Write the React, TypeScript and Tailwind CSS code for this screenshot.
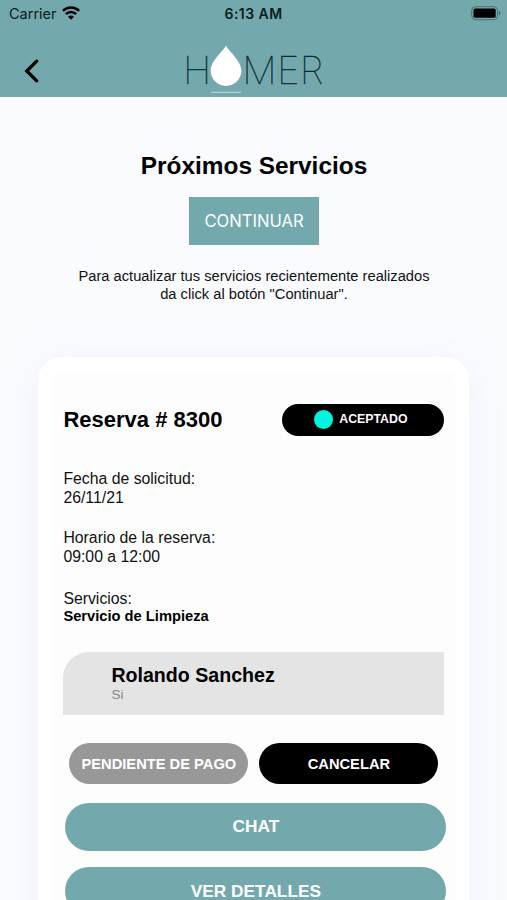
const details = [
  { label: 'Fecha de solicitud:', value: '26/11/21', className: 'mt-[34px]' },
  { label: 'Horario de la reserva:', value: '09:00 a 12:00', className: 'mt-[22px]' },
];

const StatusBar = () => (
  <div className="grid h-7 grid-cols-3 items-center pl-[9px] pr-[6px] font-[Inter,sans-serif] text-[#0b1c20]">
    <div className="flex items-center gap-[5px]">
      <span className="text-[14.5px]">Carrier</span>
      <svg className="-mt-[2px]" width="18" height="14" viewBox="0 0 18 14" fill="none" stroke="#000" strokeWidth="2.5">
        <path d="M0.9 4.9C5.4 0.4 12.6 0.4 17.1 4.9" />
        <path d="M3.9 8.2C6.8 5.3 11.2 5.3 14.1 8.2" />
        <path d="M9 13.8L6 10.8C7.7 9.2 10.3 9.2 12 10.8Z" fill="#000" stroke="none" />
      </svg>
    </div>
    <span className="-mt-px -ml-[3px] text-center text-[14px] font-semibold tracking-[0.45px]">6:13 AM</span>
    <svg className="-mt-px justify-self-end" width="30" height="15" viewBox="0 0 30 15">
      <rect x="0.7" y="0.7" width="25.8" height="13" rx="3.8" fill="none" stroke="#3c5c60" strokeOpacity="0.75" />
      <rect x="2.5" y="2.6" width="22.2" height="9.2" rx="1.6" fill="#000" />
      <path d="M27.8 5v4.4c1-.3 1.7-1.2 1.7-2.2S28.8 5.3 27.8 5Z" fill="#3c5c60" fillOpacity="0.75" />
    </svg>
  </div>
);

const Logo = () => (
  <div className="relative flex h-[52px] w-[140px] items-center font-[Inter,sans-serif] text-[38.5px] leading-none font-thin text-[#0b2a30] [-webkit-text-stroke:0.3px_#0b2a30]">
    <span>H</span>
    <svg className="absolute left-[27px] top-[1px]" width="32" height="50" viewBox="0 0 32 50">
      <path d="M16 0.5C14.5 5 0.6 15.5 0.6 25.6C0.6 34.3 7.5 41 16 41S31.4 34.3 31.4 25.6C31.4 15.5 17.5 5 16 0.5Z" fill="#fff" />
      <path d="M1 47.3H31" stroke="#c3dbdd" strokeWidth="1" />
    </svg>
    <span className="ml-[31px] tracking-[0.3px]">MER</span>
  </div>
);

const Header = () => (
  <header className="h-[97px] bg-[#73a9ad]">
    <StatusBar />
    <div className="flex h-[69px] items-start">
      <svg
        className="ml-6 mt-[31px]"
        width="15"
        height="24"
        viewBox="0 0 15 24"
        fill="none"
        stroke="#000"
        strokeWidth="3.3"
        strokeLinecap="round"
      >
        <path d="M12.7 2.2L2.8 12L12.7 21.8" />
      </svg>
      <div className="ml-[144px] mt-[16px]">
        <Logo />
      </div>
    </div>
  </header>
);

const ReservationCard = () => (
  <section className="ml-[38.4px] mr-[37.6px] mt-[54px] h-[620px] rounded-[24px] border-[14px] border-white bg-[#fdfdfd] px-[11px] pt-[33px] shadow-[0_10px_40px_rgba(90,110,190,0.07)]">
    <div className="flex items-center justify-between">
      <h2 className="text-[22px] leading-8 font-bold">Reserva # 8300</h2>
      <div className="-mt-px flex h-8 w-[162px] items-center justify-center gap-[6px] rounded-full bg-black pr-[5px] text-[12.3px] font-bold text-white">
        <span className="size-[19px] rounded-full bg-[#00f5df]" />
        ACEPTADO
      </div>
    </div>

    {details.map((item) => (
      <div key={item.label} className={`${item.className} text-[15.8px] leading-[18.5px] text-[#111]`}>
        <p>{item.label}</p>
        <p>{item.value}</p>
      </div>
    ))}
    <div className="mt-6 leading-[17.5px] text-[#111]">
      <p className="text-[15.8px]">Servicios:</p>
      <p className="text-[14.7px] font-bold text-black">Servicio de Limpieza</p>
    </div>

    <div className="mt-[27px] h-[63px] rounded-tl-[26px] bg-[#e4e4e4] pt-[11px] pl-12">
      <p className="text-[19.6px] leading-6 font-bold">Rolando Sanchez</p>
      <p className="mt-px text-[13.6px] leading-[14px] text-[#8a8a8a]">Si</p>
    </div>

    <div className="mx-[6px] mt-7 flex justify-between text-[14.7px] font-bold text-white">
      <button className="h-[41px] w-[179px] rounded-full bg-[#989898] pt-px whitespace-nowrap">PENDIENTE DE PAGO</button>
      <button className="h-[41px] w-[179px] rounded-full bg-black pt-px">CANCELAR</button>
    </div>
    <div className="mt-[18.5px] -mr-[2px] ml-[2px] flex flex-col gap-[16.5px] text-[17.3px] font-bold text-white">
      <button className="h-12 rounded-full bg-[#73a9ad] pt-px">CHAT</button>
      <button className="h-12 rounded-full bg-[#73a9ad] pt-px">VER DETALLES</button>
    </div>
  </section>
);

const App = () => {
  return (
    <div className="h-[900px] w-[507px] overflow-hidden bg-[#fafbff] font-['Liberation_Sans',Arial,sans-serif] text-black">
      <Header />
      <main className="flex flex-col">
        <div className="flex flex-col items-center pl-px text-center">
          <h1 className="mt-[51px] text-[24.4px] leading-9 font-bold">Próximos Servicios</h1>
          <button className="mt-[13px] h-12 w-[130px] bg-[#73a9ad] pt-px font-[Inter,sans-serif] text-[16.6px] text-white">
            CONTINUAR
          </button>
          <p className="mt-[23px] text-[14.7px] leading-[17.5px] text-[#111]">
            Para actualizar tus servicios recientemente realizados
            <br />
            da click al botón "Continuar".
          </p>
        </div>
        <ReservationCard />
      </main>
    </div>
  );
};

export default App;
